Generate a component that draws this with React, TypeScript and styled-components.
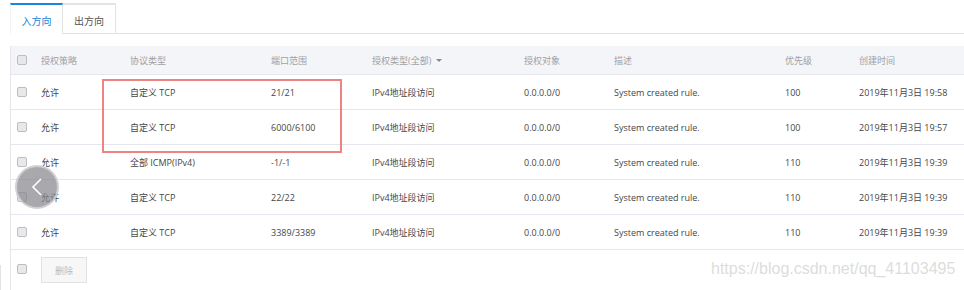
import React from "react";
import styled, { createGlobalStyle } from "styled-components";

const Global = createGlobalStyle`
  html, body { margin: 0; padding: 0; background: #fff; }
  body { font-family: "Open Sans", "Noto Sans CJK SC", sans-serif; font-size: 9px; color: #333; }
`;

const Page = styled.div`
  position: relative;
  width: 964px;
  height: 290px;
  overflow: hidden;
  padding: 3px 0 0 10px;
  box-sizing: border-box;
`;

const Tabs = styled.div`
  display: flex;
  height: 30px;
  border-bottom: 1px solid #e3e3e3;
`;

const Tab = styled.div<{ $active?: boolean }>`
  width: 53px;
  display: flex;
  align-items: center;
  justify-content: center;
  font-size: 10px;
  box-sizing: border-box;
  color: ${(p) => (p.$active ? "#1a7fd8" : "#555")};
  border-top: 2px solid ${(p) => (p.$active ? "#1585e0" : "#e3e3e3")};
  border-right: 1px solid #e3e3e3;
  border-left: ${(p) => (p.$active ? "1px solid #f3f3f3" : "none")};
  background: #fff;
  margin-bottom: ${(p) => (p.$active ? "-1px" : "0")};
  padding-top: 2px;
`;

const Table = styled.div`
  margin-top: 12px;
  border-left: 1px solid #e6e6ea;
`;

const cols = "30px 89px 141px 101px 152px 90px 171px 74px 1fr";

const HeadRow = styled.div`
  display: grid;
  grid-template-columns: ${cols};
  height: 28px;
  align-items: center;
  background: #f4f5f9;
  border-bottom: 1px solid #e6e6ee;
  color: #a0a0a4;
`;

const Row = styled.div`
  display: grid;
  grid-template-columns: ${cols};
  height: 34px;
  align-items: center;
  border-bottom: 1px solid #e6e6ee;
  color: #464646;
`;

const Cell = styled.div`
  white-space: nowrap;
  display: flex;
  align-items: center;
`;

const Box = styled.span`
  display: inline-block;
  width: 8px;
  height: 8px;
  margin-left: 6px;
  border: 1px solid #bdbdc2;
  border-radius: 2px;
  background: #e8e8ea;
`;

const Caret = styled.span`
  display: inline-block;
  margin-left: 5px;
  width: 0;
  height: 0;
  border-left: 3px solid transparent;
  border-right: 3px solid transparent;
  border-top: 3px solid #888;
`;

const Footer = styled.div`
  display: flex;
  align-items: center;
  height: 40px;
  padding-bottom: 1px;
`;

const FootCheck = styled.div`
  width: 30px;
`;

const DeleteButton = styled.div`
  width: 44px;
  height: 24px;
  border: 1px solid #e2e2e2;
  background: #f7f7f7;
  color: #bbb;
  display: flex;
  align-items: center;
  justify-content: center;
`;

const Highlight = styled.div`
  position: absolute;
  left: 102px;
  top: 79px;
  width: 236px;
  height: 70px;
  border: 2px solid rgba(232, 90, 90, 0.75);
`;

const NavCircle = styled.div`
  position: absolute;
  left: 15px;
  top: 165px;
  width: 40px;
  height: 40px;
  border-radius: 50%;
  background: rgba(135, 135, 142, 0.72);
  border: 2px solid rgba(225, 225, 230, 0.7);
  display: flex;
  align-items: center;
  justify-content: center;
`;

const Watermark = styled.div`
  position: absolute;
  left: 711px;
  top: 260px;
  font-family: "Liberation Sans", Arial, sans-serif;
  font-size: 16px;
  color: rgba(205, 205, 205, 0.7);
  white-space: nowrap;
`;

const LeftEdge = styled.div`
  position: absolute;
  left: 0;
  top: 265px;
  width: 1px;
  height: 25px;
  background: #e3e3e3;
`;

const headers = ["授权策略", "协议类型", "端口范围", "授权类型(全部)", "授权对象", "描述", "优先级", "创建时间"];

const rows = [
  ["允许", "自定义 TCP", "21/21", "IPv4地址段访问", "0.0.0.0/0", "System created rule.", "100", "2019年11月3日 19:58"],
  ["允许", "自定义 TCP", "6000/6100", "IPv4地址段访问", "0.0.0.0/0", "System created rule.", "100", "2019年11月3日 19:57"],
  ["允许", "全部 ICMP(IPv4)", "-1/-1", "IPv4地址段访问", "0.0.0.0/0", "System created rule.", "110", "2019年11月3日 19:39"],
  ["允许", "自定义 TCP", "22/22", "IPv4地址段访问", "0.0.0.0/0", "System created rule.", "110", "2019年11月3日 19:39"],
  ["允许", "自定义 TCP", "3389/3389", "IPv4地址段访问", "0.0.0.0/0", "System created rule.", "110", "2019年11月3日 19:39"],
];

export default function App() {
  return (
    <>
      <Global />
      <Page>
        <Tabs>
          <Tab $active>入方向</Tab>
          <Tab>出方向</Tab>
        </Tabs>
        <Table>
          <HeadRow>
            <Cell><Box /></Cell>
            {headers.map((h, i) => (
              <Cell key={h}>
                {h}
                {i === 3 && <Caret />}
              </Cell>
            ))}
          </HeadRow>
          {rows.map((r, ri) => (
            <Row key={ri}>
              <Cell><Box /></Cell>
              {r.map((c, ci) => (
                <Cell key={ci}>{c}</Cell>
              ))}
            </Row>
          ))}
          <Footer>
            <FootCheck><Box /></FootCheck>
            <DeleteButton>删除</DeleteButton>
          </Footer>
        </Table>
        <Highlight />
        <NavCircle>
          <svg width="14" height="20" viewBox="0 0 14 20">
            <path d="M11 2 L3 10 L11 18" fill="none" stroke="#fff" strokeWidth="1.6" />
          </svg>
        </NavCircle>
        <Watermark>https://blog.csdn.net/qq_41103495</Watermark>
        <LeftEdge />
      </Page>
    </>
  );
}
